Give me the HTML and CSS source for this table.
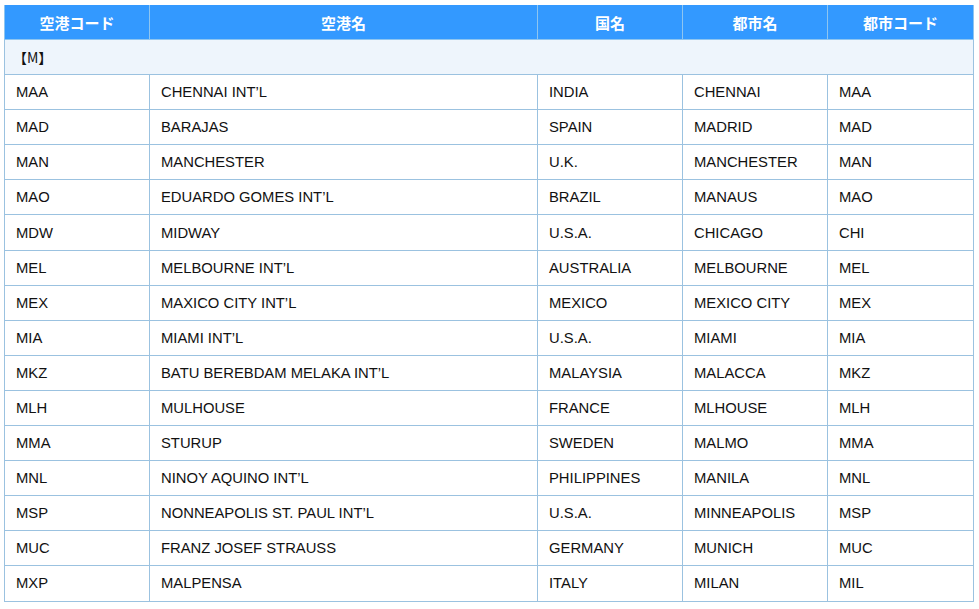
FILE: index.html
```html
<!DOCTYPE html>
<html lang="ja">
<head>
<meta charset="utf-8">
<link rel="stylesheet" href="styles.css">
</head>
<body>
<table class="airports">
<colgroup>
<col class="c1"><col class="c2"><col class="c3"><col class="c4"><col class="c5">
</colgroup>
<thead>
<tr><th>空港コード</th><th>空港名</th><th>国名</th><th>都市名</th><th>都市コード</th></tr>
</thead>
<tbody>
<tr class="section"><td colspan="5">【M】</td></tr>
<tr><td>MAA</td><td>CHENNAI INT’L</td><td>INDIA</td><td>CHENNAI</td><td>MAA</td></tr>
<tr><td>MAD</td><td>BARAJAS</td><td>SPAIN</td><td>MADRID</td><td>MAD</td></tr>
<tr><td>MAN</td><td>MANCHESTER</td><td>U.K.</td><td>MANCHESTER</td><td>MAN</td></tr>
<tr><td>MAO</td><td>EDUARDO GOMES INT’L</td><td>BRAZIL</td><td>MANAUS</td><td>MAO</td></tr>
<tr><td>MDW</td><td>MIDWAY</td><td>U.S.A.</td><td>CHICAGO</td><td>CHI</td></tr>
<tr><td>MEL</td><td>MELBOURNE INT’L</td><td>AUSTRALIA</td><td>MELBOURNE</td><td>MEL</td></tr>
<tr><td>MEX</td><td>MAXICO CITY INT’L</td><td>MEXICO</td><td>MEXICO CITY</td><td>MEX</td></tr>
<tr><td>MIA</td><td>MIAMI INT’L</td><td>U.S.A.</td><td>MIAMI</td><td>MIA</td></tr>
<tr><td>MKZ</td><td>BATU BEREBDAM MELAKA INT’L</td><td>MALAYSIA</td><td>MALACCA</td><td>MKZ</td></tr>
<tr><td>MLH</td><td>MULHOUSE</td><td>FRANCE</td><td>MLHOUSE</td><td>MLH</td></tr>
<tr><td>MMA</td><td>STURUP</td><td>SWEDEN</td><td>MALMO</td><td>MMA</td></tr>
<tr><td>MNL</td><td>NINOY AQUINO INT’L</td><td>PHILIPPINES</td><td>MANILA</td><td>MNL</td></tr>
<tr><td>MSP</td><td>NONNEAPOLIS ST. PAUL INT’L</td><td>U.S.A.</td><td>MINNEAPOLIS</td><td>MSP</td></tr>
<tr><td>MUC</td><td>FRANZ JOSEF STRAUSS</td><td>GERMANY</td><td>MUNICH</td><td>MUC</td></tr>
<tr><td>MXP</td><td>MALPENSA</td><td>ITALY</td><td>MILAN</td><td>MIL</td></tr>
</tbody>
</table>
</body>
</html>
```
FILE: styles.css
```css
html, body {
  margin: 0;
  padding: 0;
  background: #ffffff;
}
body {
  padding: 5px 0 0 4px;
  font-family: "Liberation Sans", Arial, "Noto Sans CJK JP", sans-serif;
}
.airports {
  border-collapse: collapse;
  table-layout: fixed;
  width: 969px;
  color: #111111;
  font-size: 14.8px;
}
.c1 { width: 145px; }
.c2 { width: 388px; }
.c3 { width: 145px; }
.c4 { width: 145px; }
.c5 { width: 146px; }
.airports th {
  background: #3399ff;
  color: #ffffff;
  font-family: "Noto Sans CJK JP", sans-serif;
  font-weight: 700;
  font-size: 15px;
  height: 34px;
  padding: 0;
  border: 1px solid #8ec5f0;
  border-top: none;
  text-align: center;
  vertical-align: middle;
}
.airports td {
  height: 34.1px;
  padding: 0 0 0 11px;
  border: 1px solid #9bc2e0;
  text-align: left;
  vertical-align: middle;
  white-space: nowrap;
}
.airports .section td {
  background: #eef5fc;
  font-family: "Noto Sans CJK JP", sans-serif;
  font-weight: 400;
  font-size: 14px;
  padding-left: 8px;
}
```
